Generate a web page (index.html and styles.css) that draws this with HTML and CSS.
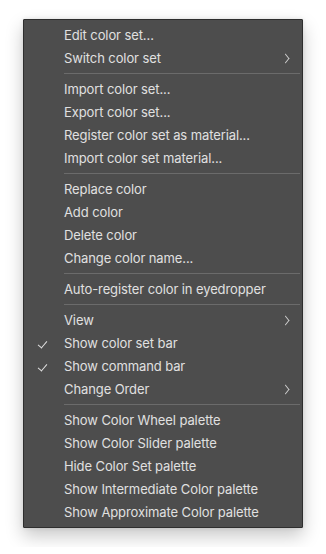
FILE: index.html
```html
<!DOCTYPE html>
<html lang="en">
<head>
    <meta charset="UTF-8">
    <meta name="viewport" content="width=device-width, initial-scale=1.0">
    <title>Color Set Menu</title>
    <link rel="stylesheet" href="styles.css">
</head>
<body>

    <div class="menu">
        <div class="item">Edit color set...</div>
        <div class="item sub">Switch color set</div>
        <div class="sep"></div>

        <div class="item">Import color set...</div>
        <div class="item">Export color set...</div>
        <div class="item">Register color set as material...</div>
        <div class="item">Import color set material...</div>
        <div class="sep"></div>

        <div class="item">Replace color</div>
        <div class="item">Add color</div>
        <div class="item">Delete color</div>
        <div class="item">Change color name...</div>
        <div class="sep"></div>

        <div class="item">Auto-register color in eyedropper</div>
        <div class="sep"></div>

        <div class="item sub">View</div>
        <div class="item checked">Show color set bar</div>
        <div class="item checked">Show command bar</div>
        <div class="item sub">Change Order</div>
        <div class="sep"></div>

        <div class="item">Show Color Wheel palette</div>
        <div class="item">Show Color Slider palette</div>
        <div class="item">Hide Color Set palette</div>
        <div class="item">Show Intermediate Color palette</div>
        <div class="item">Show Approximate Color palette</div>
    </div>

</body>
</html>
```

FILE: styles.css
```css
body {
    margin: 0;
    padding: 19px 23px;
    background-color: #ffffff;
    font-family: Inter, "Noto Sans", sans-serif;
}
.menu {
    width: 278px;
    padding: 4px 0 3px;
    background-color: #4d4d4d;
    border: 1px solid #2e2e2e;
    border-radius: 1px;
    box-shadow: 0px 8px 18px rgba(0, 0, 0, 0.22), 0px 0px 4px rgba(0, 0, 0, 0.1);
}
.item {
    position: relative;
    height: 23px;
    line-height: 23px;
    padding-left: 40px;
    font-size: 13px;
    letter-spacing: -0.1px;
    color: #e0e0e0;
    white-space: nowrap;
}
.item.checked::before {
    content: "";
    position: absolute;
    left: 16px;
    top: 7px;
    width: 4px;
    height: 8px;
    border-right: 1.5px solid #e0e0e0;
    border-bottom: 1.5px solid #e0e0e0;
    transform: rotate(40deg);
}
.item.sub::after {
    content: "";
    position: absolute;
    right: 13px;
    top: 8px;
    width: 6px;
    height: 6px;
    border-right: 1.5px solid #cfcfcf;
    border-top: 1.5px solid #cfcfcf;
    transform: scaleX(0.8) rotate(45deg);
}
.sep {
    height: 1px;
    margin: 3px 2px 4px 40px;
    background-color: #6b6b6b;
}
```
